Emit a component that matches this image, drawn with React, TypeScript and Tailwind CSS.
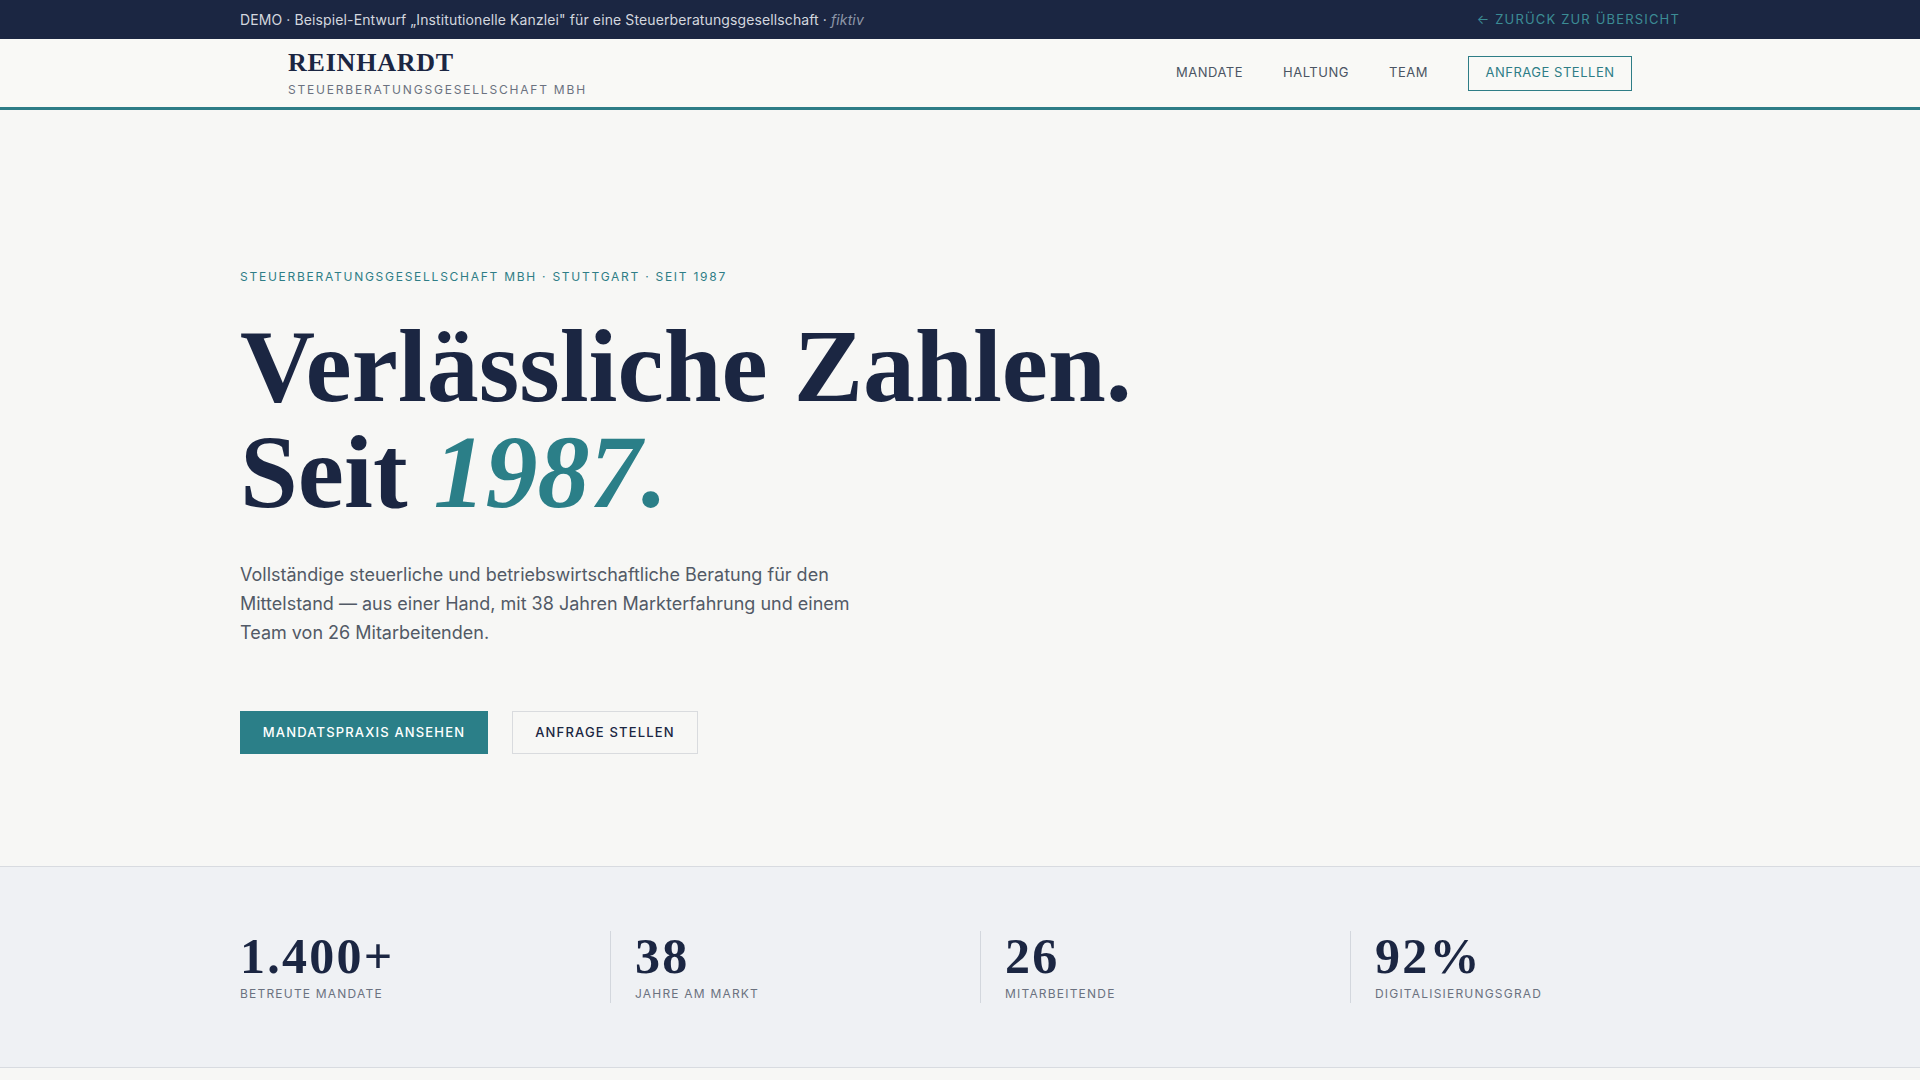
import React from "react";

const stats = [
  { value: "1.400+", label: "Betreute Mandate" },
  { value: "38", label: "Jahre am Markt" },
  { value: "26", label: "Mitarbeitende" },
  { value: "92%", label: "Digitalisierungsgrad" },
];

const serif = "font-['Liberation_Serif','Times_New_Roman',serif]";

export default function App() {
  return (
    <div className="min-h-screen bg-[#f7f7f5] font-['Inter','Liberation_Sans',sans-serif] text-[#1b2642]">
      {/* Demo notice */}
      <div className="h-[39px] bg-[#1b2642]">
        <div className="mx-auto flex h-full w-[1440px] items-center justify-between">
          <p className="text-[14px] tracking-[0.008em] text-[#d3d7df]">
            DEMO · Beispiel-Entwurf „Institutionelle Kanzlei" für eine Steuerberatungsgesellschaft ·{" "}
            <span className="italic text-[#8e97a8]">fiktiv</span>
          </p>
          <a className="text-[13px] uppercase tracking-[0.09em] text-[#3b8c95]" href="#">
            ← Zurück zur Übersicht
          </a>
        </div>
      </div>

      {/* Header */}
      <header className="h-[71px] border-b-[3px] border-[#2e7d86] bg-[#f9f9f6]">
        <div className="mx-auto flex h-full w-[1440px] items-center justify-between px-12">
          <div className="flex flex-col">
            <span className={`${serif} text-[26px] font-bold leading-[28px] tracking-[0.03em] text-[#1b2642]`}>
              REINHARDT
            </span>
            <span className="mt-[6px] text-[12px] leading-[14px] tracking-[0.15em] text-[#6b7280]">
              STEUERBERATUNGSGESELLSCHAFT MBH
            </span>
          </div>
          <nav className="flex items-center gap-10 text-[13px] tracking-[0.04em] text-[#4b5563]">
            <a href="#">MANDATE</a>
            <a href="#">HALTUNG</a>
            <a href="#">TEAM</a>
            <a
              href="#"
              className="flex h-[35px] w-[164px] items-center justify-center border border-[#2e7d86] text-[#2e7d86]"
            >
              ANFRAGE STELLEN
            </a>
          </nav>
        </div>
      </header>

      {/* Hero */}
      <section className="pb-28 pt-[159px]">
        <div className="mx-auto w-[1440px]">
          <p className="text-[12px] leading-4 tracking-[0.145em] text-[#2e7d86]">
            STEUERBERATUNGSGESELLSCHAFT MBH · STUTTGART · SEIT 1987
          </p>
          <h1 className={`${serif} mt-7 text-[104px] font-bold leading-[106px] text-[#1b2642]`}>
            Verlässliche Zahlen.
            <br />
            Seit <em className="text-[#2b7f88]">1987.</em>
          </h1>
          <p className="mt-9 max-w-[640px] text-[18px] leading-[28.8px] text-[#525a66]">
            Vollständige steuerliche und betriebswirtschaftliche Beratung für den Mittelstand — aus einer Hand,
            mit 38 Jahren Markterfahrung und einem Team von 26 Mitarbeitenden.
          </p>
          <div className="mt-16 flex gap-6">
            <a
              href="#"
              className="flex h-[43px] w-[248px] items-center justify-center bg-[#2b7f88] text-[13px] font-medium tracking-[0.09em] text-white"
            >
              MANDATSPRAXIS ANSEHEN
            </a>
            <a
              href="#"
              className="flex h-[43px] w-[186px] items-center justify-center border border-[#d9dbde] text-[13px] font-medium tracking-[0.09em] text-[#1b2642]"
            >
              ANFRAGE STELLEN
            </a>
          </div>
        </div>
      </section>

      {/* Key figures */}
      <section className="border-y border-[#d8dbe0] bg-[#eff1f4] py-16">
        <div className="mx-auto grid w-[1440px] grid-cols-4 gap-10">
          {stats.map((s, i) => (
            <div key={s.label} className={i === 0 ? "" : "border-l border-[#d3d7dd] pl-6"}>
              <div className={`${serif} text-[50px] font-bold leading-none tracking-[0.045em] text-[#1b2642]`}>
                {s.value}
              </div>
              <div className="mt-1 text-[12px] uppercase leading-[18px] tracking-[0.1em] text-[#6b7280]">
                {s.label}
              </div>
            </div>
          ))}
        </div>
      </section>

      <section className="h-[200px]" />
    </div>
  );
}
